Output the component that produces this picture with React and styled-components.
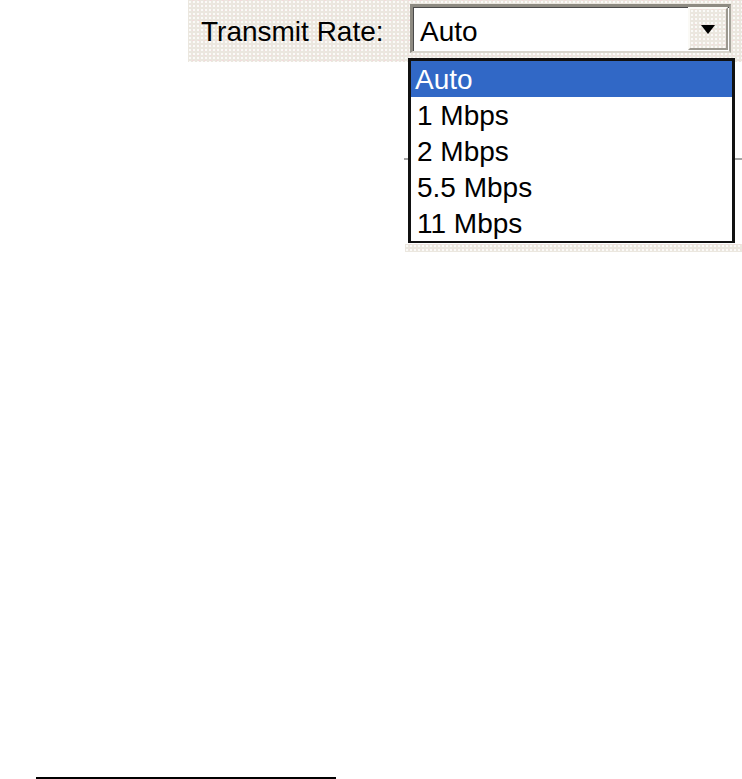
import styled, { createGlobalStyle } from "styled-components";

const GlobalStyle = createGlobalStyle`
  html, body {
    margin: 0;
    padding: 0;
    background: #ffffff;
  }
  body {
    font-family: "Liberation Sans", Arial, sans-serif;
    color: #000;
  }
`;

// XP-ish dithered dialog beige
const dither = `
  background-color: #ebe7df;
  background-image:
    radial-gradient(circle, #fbfaf8 0.8px, transparent 1px),
    radial-gradient(circle, #f2dcdc 0.7px, transparent 0.9px);
  background-size: 4px 4px, 6px 5px;
  background-position: 0 0, 2px 3px;
`;

const Page = styled.div`
  min-height: 779px;
  display: flex;
  flex-direction: column;
`;

const Shot = styled.section`
  position: relative;
  margin-left: 188px;
  width: 554px;
  height: 252px;
  display: grid;
  grid-template-rows: 62px 182px 8px;
`;

const TopBand = styled.div`
  ${dither}
  display: flex;
  align-items: flex-start;
  padding-left: 13px;
`;

const Label = styled.span`
  width: 209px;
  margin-top: 16px;
  font-size: 28px;
  line-height: 32px;
  white-space: nowrap;
`;

const Combo = styled.div`
  box-sizing: border-box;
  margin-top: 4px;
  width: 321px;
  height: 49px;
  display: flex;
  background: #ffffff;
  border-style: solid;
  border-width: 3px 2px 2px 3px;
  border-color: #8e8b82 #a9a69d #d8d5cc #8e8b82;
  box-shadow: inset 1px 1px 0 #4a4a4a;
`;

const ComboText = styled.span`
  flex: 1;
  padding: 9px 0 0 7px;
  font-size: 28px;
  line-height: 32px;
`;

const ArrowButton = styled.div`
  ${dither}
  box-sizing: border-box;
  width: 40px;
  margin: 0 1px 1px 0;
  display: flex;
  align-items: center;
  justify-content: center;
  border-style: solid;
  border-width: 2px;
  border-color: #fbfaf6 #9c9990 #9c9990 #fbfaf6;
  svg {
    margin-top: 2px;
  }
`;

const MidPanel = styled.div`
  background: #ffffff;
  display: flex;
  flex-direction: column;
`;

const Divider = styled.div`
  margin: 96px 0 0 216px;
  height: 2px;
  background: #a4a4a4;
`;

const BottomBand = styled.div`
  display: grid;
  grid-template-columns: 217px 1fr;
`;

const BandGap = styled.div`
  background: #ffffff;
`;

const BandFill = styled.div`
  ${dither}
`;

const List = styled.ul`
  position: absolute;
  left: 220px;
  top: 58px;
  width: 327px;
  box-sizing: border-box;
  margin: 0;
  padding: 0;
  list-style: none;
  background: #ffffff;
  border: 3px solid #111111;
  border-bottom-width: 2px;
`;

const Item = styled.li`
  height: 36px;
  box-sizing: border-box;
  padding: 1px 0 0 ${({ $active }) => ($active ? "4px" : "6px")};
  font-size: 28px;
  line-height: 35px;
  background: ${({ $active }) => ($active ? "#3168c6" : "transparent")};
  color: ${({ $active }) => ($active ? "#ffffff" : "#000000")};
`;

const FootRule = styled.div`
  margin: auto 0 0 36px;
  width: 300px;
  height: 2px;
  background: #000000;
`;

const rates = ["Auto", "1 Mbps", "2 Mbps", "5.5 Mbps", "11 Mbps"];

export default function App() {
  return (
    <>
      <GlobalStyle />
      <Page>
        <Shot>
          <TopBand>
            <Label>Transmit Rate:</Label>
            <Combo>
              <ComboText>Auto</ComboText>
              <ArrowButton>
                <svg width="14" height="9" viewBox="0 0 14 9">
                  <polygon points="0,0 14,0 7,9" fill="#000" />
                </svg>
              </ArrowButton>
            </Combo>
          </TopBand>
          <MidPanel>
            <Divider />
          </MidPanel>
          <BottomBand>
            <BandGap />
            <BandFill />
          </BottomBand>
          <List>
            {rates.map((r, i) => (
              <Item key={r} $active={i === 0}>
                {r}
              </Item>
            ))}
          </List>
        </Shot>
        <FootRule />
      </Page>
    </>
  );
}
